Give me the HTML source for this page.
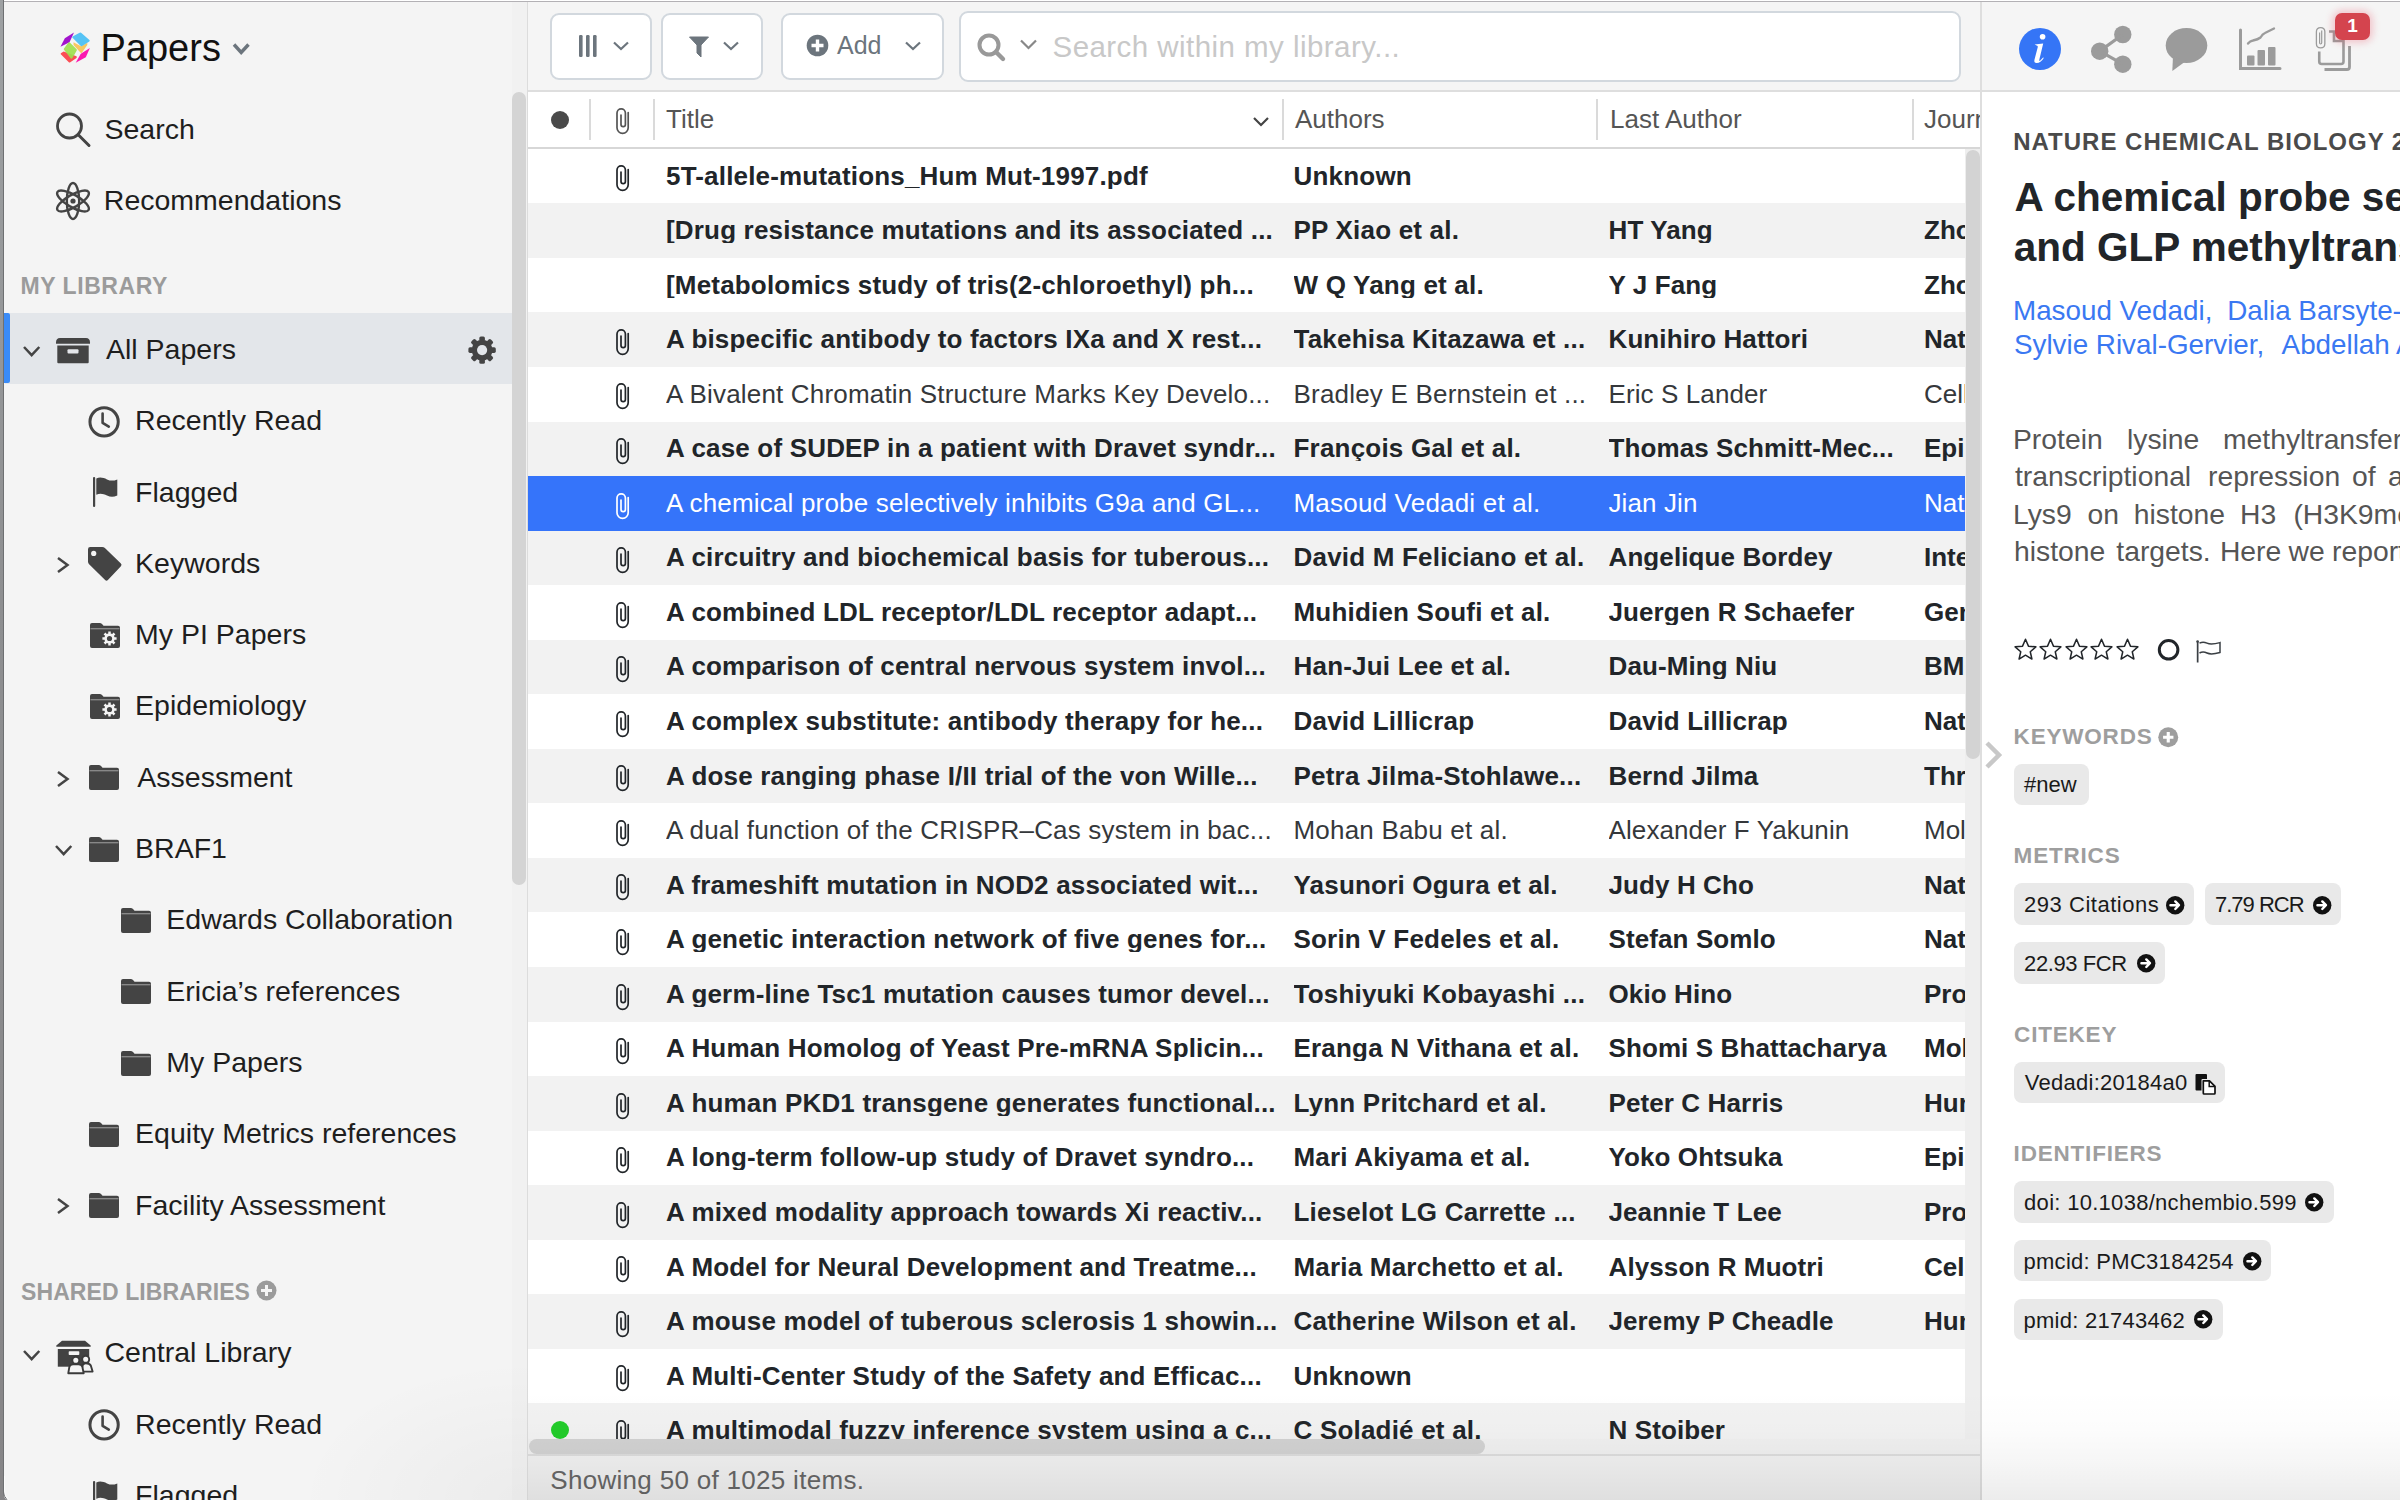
<!DOCTYPE html>
<html><head><meta charset="utf-8">
<style>
*{margin:0;padding:0;box-sizing:border-box}
html,body{width:2400px;height:1500px;overflow:hidden;background:#fff;font-family:"Liberation Sans",sans-serif}
#page{position:relative;width:2400px;height:1500px;overflow:hidden;background:#f4f4f4}
.abs{position:absolute}
.ic{position:absolute;overflow:visible}
/* desktop edge */
#edge{position:absolute;left:0;top:0;width:4px;height:1500px;background:linear-gradient(to bottom,#9ea1a3,#8e8f91 40%,#868587);border-right:1px solid #6e7072}
#topline{position:absolute;left:4px;top:0;width:2396px;height:2px;background:#fff;border-bottom:1px solid #b3b1b5}
/* sidebar */
#sidebar{position:absolute;left:5px;top:2px;width:522px;height:1498px;background:#f4f4f4;border-bottom-left-radius:10px;overflow:hidden}
.si{position:absolute;font-size:28.5px;line-height:28.5px;color:#1e1e1e;white-space:nowrap}
.sect{position:absolute;font-size:23px;line-height:23px;font-weight:bold;color:#9b9b9b;white-space:nowrap;letter-spacing:0.1px}
#sb-scroll{position:absolute;left:512px;top:92px;width:14px;height:793px;border-radius:7px;background:#d4d4d4}
#sb-track{position:absolute;left:512px;top:2px;width:15px;height:1498px;background:#f1f1f1}
#sb-div{position:absolute;left:527px;top:2px;width:1px;height:1498px;background:#dcdcdc}
/* main */
#main{position:absolute;left:528px;top:2px;width:1453px;height:1498px;background:#fff;overflow:hidden}
#toolbar{position:absolute;left:0;top:0;width:1453px;height:90px;background:#f5f5f5;border-bottom:2px solid #dedede}
.btn{position:absolute;background:#fff;border:2px solid #d2d8de;border-radius:9px}
#thead{position:absolute;left:0;top:90px;width:1453px;height:57px;background:#fff;border-bottom:2px solid #d7d7d7}
.th{position:absolute;top:13.7px;font-size:26px;line-height:26px;color:#555;white-space:nowrap}
.vdiv{position:absolute;top:7px;width:2px;height:41px;background:#dadada}
.row{position:absolute;left:0;width:1437px;height:54.55px;overflow:hidden;font-size:26px;line-height:26px}
.c{position:absolute;top:13.75px;white-space:nowrap;overflow:hidden}
.ct{left:138px;width:620px;letter-spacing:0.18px}
.ca{left:765.5px;width:300px;letter-spacing:0.2px}
.cl{left:1080.5px;width:300px;letter-spacing:0.1px}
.cj{left:1396px;width:45px}
.clip{position:absolute;left:77px;top:11.5px;width:35px;height:35px}
.gdot{position:absolute;left:23px;top:18px;width:18px;height:18px;border-radius:50%;background:#22cc2a}
#rows{position:absolute;left:0;top:0;width:1453px;height:1437px;overflow:hidden}
#vscroll-track{position:absolute;left:1437px;top:147px;width:16px;height:1290px;background:#eeeeee}
#vscroll{position:absolute;left:1438px;top:148px;width:14px;height:609px;border-radius:7px;background:#d3d3d3}
#hscroll-track{position:absolute;left:0;top:1437px;width:1453px;height:16px;background:#f0f0f0}
#hscroll{position:absolute;left:1px;top:1437px;width:956px;height:15px;border-radius:7.5px;background:#d2d2d2}
#footer{position:absolute;left:0;top:1452px;width:1453px;height:46px;background:#f1f1f1;border-top:2px solid #dddddd}
#footer span{position:absolute;left:22.3px;top:10.5px;font-size:26px;line-height:26px;color:#676767;white-space:nowrap;letter-spacing:0.3px}
#rdiv{position:absolute;left:1980px;top:2px;width:2px;height:1498px;background:#dedede}
/* right panel */
#right{position:absolute;left:1982px;top:2px;width:418px;height:1498px;background:#fff;overflow:hidden}
#rtool{position:absolute;left:0;top:0;width:418px;height:90px;background:#f5f5f5;border-bottom:2px solid #dedede}
.rlabel{position:absolute;font-size:22.5px;line-height:22.5px;font-weight:bold;color:#9e9e9e;white-space:nowrap;letter-spacing:0.4px}
.badge{position:absolute;height:41.5px;background:#e9e9e9;border-radius:8px;font-size:23px;line-height:23px;color:#1a1a1a;white-space:nowrap}
.badge span{position:absolute;left:11px;top:9.5px}
#shade{position:absolute;left:528px;top:1390px;width:1872px;height:110px;background:linear-gradient(to bottom,rgba(0,0,0,0) 0%,rgba(0,0,0,0.012) 35%,rgba(0,0,0,0.035) 65%,rgba(0,0,0,0.075) 100%);pointer-events:none}
#shade2{position:absolute;left:300px;top:1360px;width:228px;height:140px;background:radial-gradient(ellipse 230px 140px at 100% 100%,rgba(0,0,0,0.035),rgba(0,0,0,0) 100%);pointer-events:none}
</style></head><body><div id="page">
<div id="edge"></div>
<div id="topline"></div>

<div id="sidebar">
</div>
<div id="sb-track"></div>
<div id="sb-scroll"></div>
<div id="sb-div"></div>

<!-- sidebar content (absolute to page) -->
<svg class="ic" style="left:55px;top:28px" width="40" height="40" viewBox="0 0 40 40">
  <path d="M5.5 18.8 L9.8 10.2 L19 4.6 L14.5 14.2 Z" fill="#a214cc"/>
  <path d="M5.8 26.2 Q5.4 25.4 6.2 24.9 L8.7 23.6 L20.8 28 Q22.8 28.7 21.5 29.9 L15.3 34.3 Q14.5 34.9 13.8 34.2 Z" fill="#fb4e55"/>
  <path d="M18.5 14.3 L26 18.3 L32.3 14.8 L32.3 17 L27 24.4 Q26.2 25.3 25.4 24.6 L18.5 17 Z" fill="#f8c862"/>
  <path d="M17.3 9.6 Q17 9 17.6 8.6 L24.6 4.8 Q25.6 4.3 26.4 4.9 L34.4 12.1 Q35.2 12.8 34.3 13.5 L27.2 17.9 Q26.3 18.4 25.5 17.8 Z" fill="#55c3f5"/>
  <path d="M9 21.8 Q8.4 21.1 9 20.4 L13.2 14.8 Q14 14 14.8 14.6 L21.6 21.2 Q22.2 22 21.6 22.7 L17.3 30.2 Q16.6 31 15.8 30.4 Z" fill="#9ddf4e" fill-opacity="0.92"/>
  <path d="M20.7 34.8 L25.8 25.8 L34.9 20.1 L30.8 29.3 Z" fill="#fb18b0"/>
</svg>
<div class="abs" style="left:100.5px;top:28.6px;font-size:38px;line-height:38px;color:#111;white-space:nowrap">Papers</div>
<svg class="ic" style="left:231px;top:41px" width="21" height="16" viewBox="0 0 21 16"><path d="M3 3.5 L10.2 11.5 L17.5 3.5" fill="none" stroke="#6c757d" stroke-width="3.4"/></svg>

<svg class="ic" style="left:54px;top:111px" width="38" height="38" viewBox="0 0 38 38"><circle cx="15.5" cy="15" r="12" fill="none" stroke="#444" stroke-width="2.8"/><path d="M24 23.5 L35 34.5" stroke="#444" stroke-width="3" stroke-linecap="round"/></svg>
<div class="si" style="left:104.5px;top:114.6px">Search</div>
<svg class="ic" style="left:54px;top:181px" width="38" height="40" viewBox="0 0 38 40">
 <g fill="none" stroke="#444" stroke-width="2.4">
  <ellipse cx="19" cy="20" rx="6.2" ry="18"/>
  <ellipse cx="19" cy="20" rx="6.2" ry="18" transform="rotate(60 19 20)"/>
  <ellipse cx="19" cy="20" rx="6.2" ry="18" transform="rotate(-60 19 20)"/>
 </g><circle cx="19" cy="20" r="2.6" fill="#444"/></svg>
<div class="si" style="left:103.8px;top:185.9px">Recommendations</div>
<div class="sect" style="left:20.5px;top:274.8px;letter-spacing:0.55px">MY LIBRARY</div>
<div class="abs" style="left:5px;top:313.3px;width:507px;height:70.3px;background:#e3e6ea"></div>
<div class="abs" style="left:4px;top:313.3px;width:6px;height:70px;background:#3a8bf7;border-radius:0 2px 2px 0"></div>
<svg class="ic" style="left:467px;top:335px" width="30" height="30" viewBox="0 0 30 30"><circle cx="15.1" cy="15.1" r="10.4" fill="#444"/><rect x="12.3" y="1.4000000000000004" width="5.6" height="5.299999999999999" rx="1.6" fill="#444" transform="rotate(0 15.1 15.1)"/><rect x="12.3" y="1.4000000000000004" width="5.6" height="5.299999999999999" rx="1.6" fill="#444" transform="rotate(45 15.1 15.1)"/><rect x="12.3" y="1.4000000000000004" width="5.6" height="5.299999999999999" rx="1.6" fill="#444" transform="rotate(90 15.1 15.1)"/><rect x="12.3" y="1.4000000000000004" width="5.6" height="5.299999999999999" rx="1.6" fill="#444" transform="rotate(135 15.1 15.1)"/><rect x="12.3" y="1.4000000000000004" width="5.6" height="5.299999999999999" rx="1.6" fill="#444" transform="rotate(180 15.1 15.1)"/><rect x="12.3" y="1.4000000000000004" width="5.6" height="5.299999999999999" rx="1.6" fill="#444" transform="rotate(225 15.1 15.1)"/><rect x="12.3" y="1.4000000000000004" width="5.6" height="5.299999999999999" rx="1.6" fill="#444" transform="rotate(270 15.1 15.1)"/><rect x="12.3" y="1.4000000000000004" width="5.6" height="5.299999999999999" rx="1.6" fill="#444" transform="rotate(315 15.1 15.1)"/><circle cx="15.1" cy="15.1" r="5.1" fill="#e3e6ea"/></svg>
<div class="si" style="left:106.0px;top:334.9px">All Papers</div>
<svg class="ic" style="left:56px;top:338.0px" width="34" height="26" viewBox="0 0 34 26"><path d="M0 4.5 Q0 0 4 0 H30 Q34 0 34 4.5 V5.8 H0 Z" fill="#444"/><path d="M1.3 7.6 H32.7 V24.3 Q32.7 25.3 31.7 25.3 H2.3 Q1.3 25.3 1.3 24.3 Z" fill="#444"/><rect x="11.5" y="11.3" width="11" height="4.2" rx="1" fill="#e4e6ea"/></svg>
<svg class="ic" style="left:22.7px;top:346.0px" width="17.3" height="10.7" viewBox="0 0 17.3 10.7"><path d="M1 1 L8.65 9.2 L16.3 1" fill="none" stroke="#444" stroke-width="2.5"/></svg>
<div class="si" style="left:135.1px;top:406.2px">Recently Read</div>
<svg class="ic" style="left:88.2px;top:405.8px" width="34" height="34" viewBox="0 0 34 34"><circle cx="16.1" cy="15.85" r="14.15" fill="none" stroke="#444" stroke-width="3"/><path d="M14.6 7.5 V16.8 L20.8 20.6" fill="none" stroke="#444" stroke-width="2.6" stroke-linecap="round" stroke-linejoin="round"/></svg>
<div class="si" style="left:135.1px;top:477.5px">Flagged</div>
<svg class="ic" style="left:93px;top:477.1px" width="26" height="31" viewBox="0 0 26 31"><rect x="0" y="0" width="2.2" height="30" rx="1" fill="#444"/><path d="M3.3 1.5 C7 -0.2 10.5 0.8 14 2.4 C17.5 4 20.5 4 24.3 2.4 V18.5 C20.5 20.2 17.5 20.2 14 18.5 C10.5 16.9 7 15.9 3.3 17.8 Z" fill="#444"/></svg>
<div class="si" style="left:135.1px;top:548.8px">Keywords</div>
<svg class="ic" style="left:87.8px;top:547.1px" width="34" height="35" viewBox="0 0 34 35"><path d="M0 2.2 Q0 0 2.2 0 H14.2 Q15.8 0 16.9 1.1 L32.9 16.6 Q34.2 17.9 32.9 19.2 L19.9 33 Q18.5 34.4 17.1 33 L1.1 17.2 Q0 16.1 0 14.5 Z" fill="#444"/><circle cx="5.7" cy="6.4" r="2.6" fill="#f4f4f4"/></svg>
<svg class="ic" style="left:57.3px;top:556.6999999999999px" width="12" height="16" viewBox="0 0 12 16"><path d="M1 1 L10.5 8.0 L1 15" fill="none" stroke="#444" stroke-width="2.5"/></svg>
<div class="si" style="left:135.1px;top:620.1px">My PI Papers</div>
<svg class="ic" style="left:89.7px;top:623.1px" width="31" height="26" viewBox="0 0 31 26"><path d="M0 2 Q0 0 2 0 H10 Q11.5 0 12.5 1.5 L13.5 2.8 H28 Q30 2.8 30 4.8 V23 Q30 25 28 25 H2 Q0 25 0 23 Z" fill="#444"/><rect x="0.5" y="5.2" width="29" height="1.1" fill="#9a9a9a"/><path d="M26.59 14.23 L26.59 16.77 L24.54 16.71 L23.92 18.21 L25.41 19.62 L23.62 21.41 L22.21 19.92 L20.71 20.54 L20.77 22.59 L18.23 22.59 L18.29 20.54 L16.79 19.92 L15.38 21.41 L13.59 19.62 L15.08 18.21 L14.46 16.71 L12.41 16.77 L12.41 14.23 L14.46 14.29 L15.08 12.79 L13.59 11.38 L15.38 9.59 L16.79 11.08 L18.29 10.46 L18.23 8.41 L20.77 8.41 L20.71 10.46 L22.21 11.08 L23.62 9.59 L25.41 11.38 L23.92 12.79 L24.54 14.29 Z" fill="#f4f4f4"/><circle cx="19.5" cy="15.5" r="2.6" fill="#444"/></svg>
<div class="si" style="left:135.1px;top:691.4px">Epidemiology</div>
<svg class="ic" style="left:89.7px;top:694.4px" width="31" height="26" viewBox="0 0 31 26"><path d="M0 2 Q0 0 2 0 H10 Q11.5 0 12.5 1.5 L13.5 2.8 H28 Q30 2.8 30 4.8 V23 Q30 25 28 25 H2 Q0 25 0 23 Z" fill="#444"/><rect x="0.5" y="5.2" width="29" height="1.1" fill="#9a9a9a"/><path d="M26.59 14.23 L26.59 16.77 L24.54 16.71 L23.92 18.21 L25.41 19.62 L23.62 21.41 L22.21 19.92 L20.71 20.54 L20.77 22.59 L18.23 22.59 L18.29 20.54 L16.79 19.92 L15.38 21.41 L13.59 19.62 L15.08 18.21 L14.46 16.71 L12.41 16.77 L12.41 14.23 L14.46 14.29 L15.08 12.79 L13.59 11.38 L15.38 9.59 L16.79 11.08 L18.29 10.46 L18.23 8.41 L20.77 8.41 L20.71 10.46 L22.21 11.08 L23.62 9.59 L25.41 11.38 L23.92 12.79 L24.54 14.29 Z" fill="#f4f4f4"/><circle cx="19.5" cy="15.5" r="2.6" fill="#444"/></svg>
<div class="si" style="left:137.3px;top:762.7px">Assessment</div>
<svg class="ic" style="left:89.3px;top:765.4px" width="31" height="26" viewBox="0 0 31 26"><path d="M0 2 Q0 0 2 0 H10 Q11.5 0 12.5 1.5 L13.5 2.8 H28 Q30 2.8 30 4.8 V23 Q30 25 28 25 H2 Q0 25 0 23 Z" fill="#444"/><rect x="0.5" y="5.2" width="29" height="1.1" fill="#9a9a9a"/></svg>
<svg class="ic" style="left:57.3px;top:770.5999999999999px" width="12" height="16" viewBox="0 0 12 16"><path d="M1 1 L10.5 8.0 L1 15" fill="none" stroke="#444" stroke-width="2.5"/></svg>
<div class="si" style="left:135.1px;top:834.0px">BRAF1</div>
<svg class="ic" style="left:89.3px;top:836.6999999999999px" width="31" height="26" viewBox="0 0 31 26"><path d="M0 2 Q0 0 2 0 H10 Q11.5 0 12.5 1.5 L13.5 2.8 H28 Q30 2.8 30 4.8 V23 Q30 25 28 25 H2 Q0 25 0 23 Z" fill="#444"/><rect x="0.5" y="5.2" width="29" height="1.1" fill="#9a9a9a"/></svg>
<svg class="ic" style="left:54.5px;top:845.3999999999999px" width="17.3" height="10.7" viewBox="0 0 17.3 10.7"><path d="M1 1 L8.65 9.2 L16.3 1" fill="none" stroke="#444" stroke-width="2.5"/></svg>
<div class="si" style="left:166.3px;top:905.3px">Edwards Collaboration</div>
<svg class="ic" style="left:121.3px;top:908.0px" width="31" height="26" viewBox="0 0 31 26"><path d="M0 2 Q0 0 2 0 H10 Q11.5 0 12.5 1.5 L13.5 2.8 H28 Q30 2.8 30 4.8 V23 Q30 25 28 25 H2 Q0 25 0 23 Z" fill="#444"/><rect x="0.5" y="5.2" width="29" height="1.1" fill="#9a9a9a"/></svg>
<div class="si" style="left:166.3px;top:976.6px">Ericia’s references</div>
<svg class="ic" style="left:121.3px;top:979.3px" width="31" height="26" viewBox="0 0 31 26"><path d="M0 2 Q0 0 2 0 H10 Q11.5 0 12.5 1.5 L13.5 2.8 H28 Q30 2.8 30 4.8 V23 Q30 25 28 25 H2 Q0 25 0 23 Z" fill="#444"/><rect x="0.5" y="5.2" width="29" height="1.1" fill="#9a9a9a"/></svg>
<div class="si" style="left:166.3px;top:1047.9px">My Papers</div>
<svg class="ic" style="left:121.3px;top:1050.6px" width="31" height="26" viewBox="0 0 31 26"><path d="M0 2 Q0 0 2 0 H10 Q11.5 0 12.5 1.5 L13.5 2.8 H28 Q30 2.8 30 4.8 V23 Q30 25 28 25 H2 Q0 25 0 23 Z" fill="#444"/><rect x="0.5" y="5.2" width="29" height="1.1" fill="#9a9a9a"/></svg>
<div class="si" style="left:135.1px;top:1119.2px">Equity Metrics references</div>
<svg class="ic" style="left:89.3px;top:1121.8999999999999px" width="31" height="26" viewBox="0 0 31 26"><path d="M0 2 Q0 0 2 0 H10 Q11.5 0 12.5 1.5 L13.5 2.8 H28 Q30 2.8 30 4.8 V23 Q30 25 28 25 H2 Q0 25 0 23 Z" fill="#444"/><rect x="0.5" y="5.2" width="29" height="1.1" fill="#9a9a9a"/></svg>
<div class="si" style="left:135.1px;top:1190.5px">Facility Assessment</div>
<svg class="ic" style="left:89.3px;top:1193.1999999999998px" width="31" height="26" viewBox="0 0 31 26"><path d="M0 2 Q0 0 2 0 H10 Q11.5 0 12.5 1.5 L13.5 2.8 H28 Q30 2.8 30 4.8 V23 Q30 25 28 25 H2 Q0 25 0 23 Z" fill="#444"/><rect x="0.5" y="5.2" width="29" height="1.1" fill="#9a9a9a"/></svg>
<svg class="ic" style="left:57.3px;top:1198.3999999999999px" width="12" height="16" viewBox="0 0 12 16"><path d="M1 1 L10.5 8.0 L1 15" fill="none" stroke="#444" stroke-width="2.5"/></svg>
<div class="sect" style="left:21px;top:1280.6px">SHARED LIBRARIES</div>
<svg class="ic" style="left:256px;top:1280px" width="21" height="21" viewBox="0 0 21 21"><circle cx="10.5" cy="10.5" r="10" fill="#9b9b9b"/><path d="M10.5 5 V16 M5 10.5 H16" stroke="#f4f4f4" stroke-width="3"/></svg>
<div class="si" style="left:104.5px;top:1338.4px">Central Library</div>
<svg class="ic" style="left:22.7px;top:1349.5px" width="17.3" height="10.7" viewBox="0 0 17.3 10.7"><path d="M1 1 L8.65 9.2 L16.3 1" fill="none" stroke="#444" stroke-width="2.5"/></svg>
<svg class="ic" style="left:50px;top:1330px" width="50" height="50" viewBox="0 0 50 50"><path d="M12 10.7 H35 L40.7 15.6 V16.7 H6.3 V15.6 Z" fill="#424242"/><rect x="7.8" y="19" width="31.4" height="17.7" fill="#424242"/><rect x="18.7" y="21.3" width="10.6" height="3.7" rx="0.8" fill="#f4f4f4"/><path d="M31.6 41.6 L32.6 35.4 Q33.3 33.2 35.8 33.2 Q39.5 33.2 40.8 35.4 L42.6 41.6 Z" fill="#f4f4f4" stroke="#3a3a3a" stroke-width="1.9" stroke-linejoin="round"/><circle cx="35.7" cy="29.3" r="3.5" fill="#f4f4f4" stroke="#3a3a3a" stroke-width="1.9"/><path d="M18.3 43.2 L19.4 36.6 Q20.1 34.4 23 34.4 H28.6 Q31.4 34.4 32.3 36.6 L33.7 43.2 Z" fill="#f4f4f4" stroke="#3a3a3a" stroke-width="1.9" stroke-linejoin="round"/><circle cx="25.8" cy="30.3" r="3.5" fill="#f4f4f4" stroke="#3a3a3a" stroke-width="1.9"/></svg>
<div class="si" style="left:135.1px;top:1409.7px">Recently Read</div>
<svg class="ic" style="left:88.2px;top:1409.3px" width="34" height="34" viewBox="0 0 34 34"><circle cx="16.1" cy="15.85" r="14.15" fill="none" stroke="#444" stroke-width="3"/><path d="M14.6 7.5 V16.8 L20.8 20.6" fill="none" stroke="#444" stroke-width="2.6" stroke-linecap="round" stroke-linejoin="round"/></svg>
<div class="si" style="left:135.1px;top:1481.0px">Flagged</div>
<svg class="ic" style="left:93px;top:1480.6px" width="26" height="31" viewBox="0 0 26 31"><rect x="0" y="0" width="2.2" height="30" rx="1" fill="#444"/><path d="M3.3 1.5 C7 -0.2 10.5 0.8 14 2.4 C17.5 4 20.5 4 24.3 2.4 V18.5 C20.5 20.2 17.5 20.2 14 18.5 C10.5 16.9 7 15.9 3.3 17.8 Z" fill="#444"/></svg>

<div id="main">
 <div id="toolbar">
  <div class="btn" style="left:21.5px;top:11px;width:102px;height:66.5px"></div>
  <svg class="ic" style="left:49px;top:31px" width="24" height="28" viewBox="0 0 24 28"><rect x="2" y="2" width="3.6" height="22" rx="1.2" fill="#6c757d"/><rect x="9" y="2" width="3.6" height="22" rx="1.2" fill="#6c757d"/><rect x="16" y="2" width="3.6" height="22" rx="1.2" fill="#6c757d"/></svg>
  <svg class="ic" style="left:84px;top:38px" width="18" height="14" viewBox="0 0 18 14"><path d="M2 2.5 L9 9 L16 2.5" fill="none" stroke="#6c757d" stroke-width="2.2"/></svg>
  <div class="btn" style="left:132.5px;top:11px;width:102.5px;height:66.5px"></div>
  <svg class="ic" style="left:159px;top:32px" width="24" height="26" viewBox="0 0 24 26"><path d="M2.5 3 H21.5 L14 11 V23 L10 19 V11 Z" fill="#6c757d" stroke="#6c757d" stroke-width="1" stroke-linejoin="round"/></svg>
  <svg class="ic" style="left:194px;top:38px" width="18" height="14" viewBox="0 0 18 14"><path d="M2 2.5 L9 9 L16 2.5" fill="none" stroke="#6c757d" stroke-width="2.2"/></svg>
  <div class="btn" style="left:252.5px;top:11px;width:163px;height:66.5px"></div>
  <svg class="ic" style="left:278px;top:32px" width="24" height="24" viewBox="0 0 24 24"><circle cx="11.5" cy="11.5" r="10.8" fill="#6c757d"/><path d="M11.5 5.5 V17.5 M5.5 11.5 H17.5" stroke="#fff" stroke-width="3.4"/></svg>
  <div class="abs" style="left:309px;top:31.1px;font-size:25px;line-height:25px;color:#6c757d">Add</div>
  <svg class="ic" style="left:376px;top:38px" width="18" height="14" viewBox="0 0 18 14"><path d="M2 2.5 L9 9 L16 2.5" fill="none" stroke="#6c757d" stroke-width="2.2"/></svg>
  <div class="btn" style="left:430.5px;top:9px;width:1002px;height:70.5px"></div>
  <svg class="ic" style="left:448px;top:30px" width="32" height="32" viewBox="0 0 32 32"><circle cx="13" cy="13" r="9.5" fill="none" stroke="#999" stroke-width="4"/><path d="M20 20 L27 27" stroke="#999" stroke-width="4.4" stroke-linecap="round"/></svg>
  <svg class="ic" style="left:491px;top:36px" width="20" height="14" viewBox="0 0 20 14"><path d="M2 2.5 L9.5 10 L17 2.5" fill="none" stroke="#888" stroke-width="2.2"/></svg>
  <div class="abs" style="left:524.5px;top:29.7px;font-size:29.5px;line-height:29.5px;color:#c8c8c8;white-space:nowrap;letter-spacing:0.45px">Search within my library...</div>
 </div>
 <div id="thead">
  <div class="abs" style="left:23px;top:19px;width:18px;height:18px;border-radius:50%;background:#4a4a4a"></div>
  <div class="vdiv" style="left:61.3px"></div>
  <div class="clip" style="left:77px;top:11px"><svg width="35" height="35" viewBox="0 0 35 35" style="position:absolute;left:0;top:0"><path d="M16 12 V21.5 a2.2 2.2 0 0 0 4.4 0 V10 a4.2 4.2 0 0 0 -8.4 0 V24.8 a5.6 5.6 0 0 0 11.2 0 V9.5" fill="none" stroke="#555" stroke-width="1.7" stroke-linecap="round"/></svg></div>
  <div class="vdiv" style="left:124.5px"></div>
  <div class="th" style="left:138px">Title</div>
  <svg class="ic" style="left:724px;top:24px" width="18" height="13" viewBox="0 0 18 13"><path d="M2 2 L9 9 L16 2" fill="none" stroke="#444" stroke-width="2.2"/></svg>
  <div class="vdiv" style="left:754px"></div>
  <div class="th" style="left:767px">Authors</div>
  <div class="vdiv" style="left:1068px"></div>
  <div class="th" style="left:1082px">Last Author</div>
  <div class="vdiv" style="left:1384px"></div>
  <div class="th" style="left:1396px">Journal</div>
 </div>
 <div id="rows">
<div class="row" style="top:146.75px;background:#ffffff;color:#212529;font-weight:bold"><div class="clip"><svg width="35" height="35" viewBox="0 0 35 35" style="position:absolute;left:0;top:0"><path d="M16 12 V21.5 a2.2 2.2 0 0 0 4.4 0 V10 a4.2 4.2 0 0 0 -8.4 0 V24.8 a5.6 5.6 0 0 0 11.2 0 V9.5" fill="none" stroke="#212529" stroke-width="1.7" stroke-linecap="round"/></svg></div><div class="c ct">5T-allele-mutations_Hum Mut-1997.pdf</div><div class="c ca">Unknown</div><div class="c cl"></div><div class="c cj"></div></div>
<div class="row" style="top:201.30px;background:#f2f2f2;color:#212529;font-weight:bold"><div class="c ct">[Drug resistance mutations and its associated ...</div><div class="c ca">PP Xiao et al.</div><div class="c cl">HT Yang</div><div class="c cj">Zhong</div></div>
<div class="row" style="top:255.85px;background:#ffffff;color:#212529;font-weight:bold"><div class="c ct">[Metabolomics study of tris(2-chloroethyl) ph...</div><div class="c ca">W Q Yang et al.</div><div class="c cl">Y J Fang</div><div class="c cj">Zhong</div></div>
<div class="row" style="top:310.40px;background:#f2f2f2;color:#212529;font-weight:bold"><div class="clip"><svg width="35" height="35" viewBox="0 0 35 35" style="position:absolute;left:0;top:0"><path d="M16 12 V21.5 a2.2 2.2 0 0 0 4.4 0 V10 a4.2 4.2 0 0 0 -8.4 0 V24.8 a5.6 5.6 0 0 0 11.2 0 V9.5" fill="none" stroke="#212529" stroke-width="1.7" stroke-linecap="round"/></svg></div><div class="c ct">A bispecific antibody to factors IXa and X rest...</div><div class="c ca">Takehisa Kitazawa et ...</div><div class="c cl">Kunihiro Hattori</div><div class="c cj">Nature</div></div>
<div class="row" style="top:364.95px;background:#ffffff;color:#35383b;font-weight:normal"><div class="clip"><svg width="35" height="35" viewBox="0 0 35 35" style="position:absolute;left:0;top:0"><path d="M16 12 V21.5 a2.2 2.2 0 0 0 4.4 0 V10 a4.2 4.2 0 0 0 -8.4 0 V24.8 a5.6 5.6 0 0 0 11.2 0 V9.5" fill="none" stroke="#212529" stroke-width="1.7" stroke-linecap="round"/></svg></div><div class="c ct">A Bivalent Chromatin Structure Marks Key Develo...</div><div class="c ca">Bradley E Bernstein et ...</div><div class="c cl">Eric S Lander</div><div class="c cj">Cell</div></div>
<div class="row" style="top:419.50px;background:#f2f2f2;color:#212529;font-weight:bold"><div class="clip"><svg width="35" height="35" viewBox="0 0 35 35" style="position:absolute;left:0;top:0"><path d="M16 12 V21.5 a2.2 2.2 0 0 0 4.4 0 V10 a4.2 4.2 0 0 0 -8.4 0 V24.8 a5.6 5.6 0 0 0 11.2 0 V9.5" fill="none" stroke="#212529" stroke-width="1.7" stroke-linecap="round"/></svg></div><div class="c ct">A case of SUDEP in a patient with Dravet syndr...</div><div class="c ca">François Gal et al.</div><div class="c cl">Thomas Schmitt-Mec...</div><div class="c cj">Epilepsia</div></div>
<div class="row" style="top:474.05px;background:#3574fa;color:#ffffff;font-weight:normal"><div class="clip"><svg width="35" height="35" viewBox="0 0 35 35" style="position:absolute;left:0;top:0"><path d="M16 12 V21.5 a2.2 2.2 0 0 0 4.4 0 V10 a4.2 4.2 0 0 0 -8.4 0 V24.8 a5.6 5.6 0 0 0 11.2 0 V9.5" fill="none" stroke="#ffffff" stroke-width="1.7" stroke-linecap="round"/></svg></div><div class="c ct">A chemical probe selectively inhibits G9a and GL...</div><div class="c ca">Masoud Vedadi et al.</div><div class="c cl">Jian Jin</div><div class="c cj">Nature</div></div>
<div class="row" style="top:528.60px;background:#f2f2f2;color:#212529;font-weight:bold"><div class="clip"><svg width="35" height="35" viewBox="0 0 35 35" style="position:absolute;left:0;top:0"><path d="M16 12 V21.5 a2.2 2.2 0 0 0 4.4 0 V10 a4.2 4.2 0 0 0 -8.4 0 V24.8 a5.6 5.6 0 0 0 11.2 0 V9.5" fill="none" stroke="#212529" stroke-width="1.7" stroke-linecap="round"/></svg></div><div class="c ct">A circuitry and biochemical basis for tuberous...</div><div class="c ca">David M Feliciano et al.</div><div class="c cl">Angelique Bordey</div><div class="c cj">Internat</div></div>
<div class="row" style="top:583.15px;background:#ffffff;color:#212529;font-weight:bold"><div class="clip"><svg width="35" height="35" viewBox="0 0 35 35" style="position:absolute;left:0;top:0"><path d="M16 12 V21.5 a2.2 2.2 0 0 0 4.4 0 V10 a4.2 4.2 0 0 0 -8.4 0 V24.8 a5.6 5.6 0 0 0 11.2 0 V9.5" fill="none" stroke="#212529" stroke-width="1.7" stroke-linecap="round"/></svg></div><div class="c ct">A combined LDL receptor/LDL receptor adapt...</div><div class="c ca">Muhidien Soufi et al.</div><div class="c cl">Juergen R Schaefer</div><div class="c cj">Gene</div></div>
<div class="row" style="top:637.70px;background:#f2f2f2;color:#212529;font-weight:bold"><div class="clip"><svg width="35" height="35" viewBox="0 0 35 35" style="position:absolute;left:0;top:0"><path d="M16 12 V21.5 a2.2 2.2 0 0 0 4.4 0 V10 a4.2 4.2 0 0 0 -8.4 0 V24.8 a5.6 5.6 0 0 0 11.2 0 V9.5" fill="none" stroke="#212529" stroke-width="1.7" stroke-linecap="round"/></svg></div><div class="c ct">A comparison of central nervous system invol...</div><div class="c ca">Han-Jui Lee et al.</div><div class="c cl">Dau-Ming Niu</div><div class="c cj">BMC</div></div>
<div class="row" style="top:692.25px;background:#ffffff;color:#212529;font-weight:bold"><div class="clip"><svg width="35" height="35" viewBox="0 0 35 35" style="position:absolute;left:0;top:0"><path d="M16 12 V21.5 a2.2 2.2 0 0 0 4.4 0 V10 a4.2 4.2 0 0 0 -8.4 0 V24.8 a5.6 5.6 0 0 0 11.2 0 V9.5" fill="none" stroke="#212529" stroke-width="1.7" stroke-linecap="round"/></svg></div><div class="c ct">A complex substitute: antibody therapy for he...</div><div class="c ca">David Lillicrap</div><div class="c cl">David Lillicrap</div><div class="c cj">Nature</div></div>
<div class="row" style="top:746.80px;background:#f2f2f2;color:#212529;font-weight:bold"><div class="clip"><svg width="35" height="35" viewBox="0 0 35 35" style="position:absolute;left:0;top:0"><path d="M16 12 V21.5 a2.2 2.2 0 0 0 4.4 0 V10 a4.2 4.2 0 0 0 -8.4 0 V24.8 a5.6 5.6 0 0 0 11.2 0 V9.5" fill="none" stroke="#212529" stroke-width="1.7" stroke-linecap="round"/></svg></div><div class="c ct">A dose ranging phase I/II trial of the von Wille...</div><div class="c ca">Petra Jilma-Stohlawe...</div><div class="c cl">Bernd Jilma</div><div class="c cj">Thromb</div></div>
<div class="row" style="top:801.35px;background:#ffffff;color:#35383b;font-weight:normal"><div class="clip"><svg width="35" height="35" viewBox="0 0 35 35" style="position:absolute;left:0;top:0"><path d="M16 12 V21.5 a2.2 2.2 0 0 0 4.4 0 V10 a4.2 4.2 0 0 0 -8.4 0 V24.8 a5.6 5.6 0 0 0 11.2 0 V9.5" fill="none" stroke="#212529" stroke-width="1.7" stroke-linecap="round"/></svg></div><div class="c ct">A dual function of the CRISPR–Cas system in bac...</div><div class="c ca">Mohan Babu et al.</div><div class="c cl">Alexander F Yakunin</div><div class="c cj">Molec</div></div>
<div class="row" style="top:855.90px;background:#f2f2f2;color:#212529;font-weight:bold"><div class="clip"><svg width="35" height="35" viewBox="0 0 35 35" style="position:absolute;left:0;top:0"><path d="M16 12 V21.5 a2.2 2.2 0 0 0 4.4 0 V10 a4.2 4.2 0 0 0 -8.4 0 V24.8 a5.6 5.6 0 0 0 11.2 0 V9.5" fill="none" stroke="#212529" stroke-width="1.7" stroke-linecap="round"/></svg></div><div class="c ct">A frameshift mutation in NOD2 associated wit...</div><div class="c ca">Yasunori Ogura et al.</div><div class="c cl">Judy H Cho</div><div class="c cj">Nature</div></div>
<div class="row" style="top:910.45px;background:#ffffff;color:#212529;font-weight:bold"><div class="clip"><svg width="35" height="35" viewBox="0 0 35 35" style="position:absolute;left:0;top:0"><path d="M16 12 V21.5 a2.2 2.2 0 0 0 4.4 0 V10 a4.2 4.2 0 0 0 -8.4 0 V24.8 a5.6 5.6 0 0 0 11.2 0 V9.5" fill="none" stroke="#212529" stroke-width="1.7" stroke-linecap="round"/></svg></div><div class="c ct">A genetic interaction network of five genes for...</div><div class="c ca">Sorin V Fedeles et al.</div><div class="c cl">Stefan Somlo</div><div class="c cj">Nature</div></div>
<div class="row" style="top:965.00px;background:#f2f2f2;color:#212529;font-weight:bold"><div class="clip"><svg width="35" height="35" viewBox="0 0 35 35" style="position:absolute;left:0;top:0"><path d="M16 12 V21.5 a2.2 2.2 0 0 0 4.4 0 V10 a4.2 4.2 0 0 0 -8.4 0 V24.8 a5.6 5.6 0 0 0 11.2 0 V9.5" fill="none" stroke="#212529" stroke-width="1.7" stroke-linecap="round"/></svg></div><div class="c ct">A germ-line Tsc1 mutation causes tumor devel...</div><div class="c ca">Toshiyuki Kobayashi ...</div><div class="c cl">Okio Hino</div><div class="c cj">Proc</div></div>
<div class="row" style="top:1019.55px;background:#ffffff;color:#212529;font-weight:bold"><div class="clip"><svg width="35" height="35" viewBox="0 0 35 35" style="position:absolute;left:0;top:0"><path d="M16 12 V21.5 a2.2 2.2 0 0 0 4.4 0 V10 a4.2 4.2 0 0 0 -8.4 0 V24.8 a5.6 5.6 0 0 0 11.2 0 V9.5" fill="none" stroke="#212529" stroke-width="1.7" stroke-linecap="round"/></svg></div><div class="c ct">A Human Homolog of Yeast Pre-mRNA Splicin...</div><div class="c ca">Eranga N Vithana et al.</div><div class="c cl">Shomi S Bhattacharya</div><div class="c cj">Molec</div></div>
<div class="row" style="top:1074.10px;background:#f2f2f2;color:#212529;font-weight:bold"><div class="clip"><svg width="35" height="35" viewBox="0 0 35 35" style="position:absolute;left:0;top:0"><path d="M16 12 V21.5 a2.2 2.2 0 0 0 4.4 0 V10 a4.2 4.2 0 0 0 -8.4 0 V24.8 a5.6 5.6 0 0 0 11.2 0 V9.5" fill="none" stroke="#212529" stroke-width="1.7" stroke-linecap="round"/></svg></div><div class="c ct">A human PKD1 transgene generates functional...</div><div class="c ca">Lynn Pritchard et al.</div><div class="c cl">Peter C Harris</div><div class="c cj">Human</div></div>
<div class="row" style="top:1128.65px;background:#ffffff;color:#212529;font-weight:bold"><div class="clip"><svg width="35" height="35" viewBox="0 0 35 35" style="position:absolute;left:0;top:0"><path d="M16 12 V21.5 a2.2 2.2 0 0 0 4.4 0 V10 a4.2 4.2 0 0 0 -8.4 0 V24.8 a5.6 5.6 0 0 0 11.2 0 V9.5" fill="none" stroke="#212529" stroke-width="1.7" stroke-linecap="round"/></svg></div><div class="c ct">A long-term follow-up study of Dravet syndro...</div><div class="c ca">Mari Akiyama et al.</div><div class="c cl">Yoko Ohtsuka</div><div class="c cj">Epilepsia</div></div>
<div class="row" style="top:1183.20px;background:#f2f2f2;color:#212529;font-weight:bold"><div class="clip"><svg width="35" height="35" viewBox="0 0 35 35" style="position:absolute;left:0;top:0"><path d="M16 12 V21.5 a2.2 2.2 0 0 0 4.4 0 V10 a4.2 4.2 0 0 0 -8.4 0 V24.8 a5.6 5.6 0 0 0 11.2 0 V9.5" fill="none" stroke="#212529" stroke-width="1.7" stroke-linecap="round"/></svg></div><div class="c ct">A mixed modality approach towards Xi reactiv...</div><div class="c ca">Lieselot LG Carrette ...</div><div class="c cl">Jeannie T Lee</div><div class="c cj">Proc</div></div>
<div class="row" style="top:1237.75px;background:#ffffff;color:#212529;font-weight:bold"><div class="clip"><svg width="35" height="35" viewBox="0 0 35 35" style="position:absolute;left:0;top:0"><path d="M16 12 V21.5 a2.2 2.2 0 0 0 4.4 0 V10 a4.2 4.2 0 0 0 -8.4 0 V24.8 a5.6 5.6 0 0 0 11.2 0 V9.5" fill="none" stroke="#212529" stroke-width="1.7" stroke-linecap="round"/></svg></div><div class="c ct">A Model for Neural Development and Treatme...</div><div class="c ca">Maria Marchetto et al.</div><div class="c cl">Alysson R Muotri</div><div class="c cj">Cell</div></div>
<div class="row" style="top:1292.30px;background:#f2f2f2;color:#212529;font-weight:bold"><div class="clip"><svg width="35" height="35" viewBox="0 0 35 35" style="position:absolute;left:0;top:0"><path d="M16 12 V21.5 a2.2 2.2 0 0 0 4.4 0 V10 a4.2 4.2 0 0 0 -8.4 0 V24.8 a5.6 5.6 0 0 0 11.2 0 V9.5" fill="none" stroke="#212529" stroke-width="1.7" stroke-linecap="round"/></svg></div><div class="c ct">A mouse model of tuberous sclerosis 1 showin...</div><div class="c ca">Catherine Wilson et al.</div><div class="c cl">Jeremy P Cheadle</div><div class="c cj">Human</div></div>
<div class="row" style="top:1346.85px;background:#ffffff;color:#212529;font-weight:bold"><div class="clip"><svg width="35" height="35" viewBox="0 0 35 35" style="position:absolute;left:0;top:0"><path d="M16 12 V21.5 a2.2 2.2 0 0 0 4.4 0 V10 a4.2 4.2 0 0 0 -8.4 0 V24.8 a5.6 5.6 0 0 0 11.2 0 V9.5" fill="none" stroke="#212529" stroke-width="1.7" stroke-linecap="round"/></svg></div><div class="c ct">A Multi-Center Study of the Safety and Efficac...</div><div class="c ca">Unknown</div><div class="c cl"></div><div class="c cj"></div></div>
<div class="row" style="top:1401.40px;background:#f2f2f2;color:#212529;font-weight:bold"><div class="gdot"></div><div class="clip"><svg width="35" height="35" viewBox="0 0 35 35" style="position:absolute;left:0;top:0"><path d="M16 12 V21.5 a2.2 2.2 0 0 0 4.4 0 V10 a4.2 4.2 0 0 0 -8.4 0 V24.8 a5.6 5.6 0 0 0 11.2 0 V9.5" fill="none" stroke="#212529" stroke-width="1.7" stroke-linecap="round"/></svg></div><div class="c ct">A multimodal fuzzy inference system using a c...</div><div class="c ca">C Soladié et al.</div><div class="c cl">N Stoiber</div><div class="c cj"></div></div>
 </div>
 <div id="vscroll-track"></div>
 <div id="vscroll"></div>
 <div id="hscroll-track"></div>
 <div id="hscroll"></div>
 <div id="footer"><span>Showing 50 of 1025 items.</span></div>
</div>
<div id="rdiv"></div>

<div id="right">
 <div id="rtool">
  <svg class="ic" style="left:37px;top:26px" width="42" height="42" viewBox="0 0 42 42"><circle cx="21" cy="21" r="21" fill="#3575f6"/><circle cx="23.6" cy="8.8" r="2.8" fill="#fff"/><path d="M15.6 16.6 L24.2 15.4 L20.3 31.8 Q19.9 33.6 21.3 32.6 L24.3 29.2 L24.6 30.3 Q21.6 35.2 17.6 35.1 Q14.8 35 15.4 32 L18.8 18.9 Q19.1 17.5 17.6 17.4 Z" fill="#fff"/></svg>
  <svg class="ic" style="left:107px;top:22px" width="44" height="52" viewBox="0 0 44 52"><g fill="#9b9b9b"><circle cx="33.8" cy="10.5" r="8.7"/><circle cx="10.7" cy="27.2" r="8.7"/><circle cx="33.8" cy="40.2" r="8.7"/></g><path d="M33.8 10.5 L10.7 27.2 L33.8 40.2" fill="none" stroke="#9b9b9b" stroke-width="3.2"/></svg>
  <svg class="ic" style="left:182px;top:24px" width="46" height="46" viewBox="0 0 46 46"><ellipse cx="22.5" cy="19.5" rx="20.8" ry="17.5" fill="#9b9b9b"/><path d="M9 30 L8.3 45 L22 35 Z" fill="#9b9b9b"/></svg>
  <svg class="ic" style="left:255px;top:24px" width="48" height="48" viewBox="0 0 48 48"><path d="M3.5 4 V42.5 H43" fill="none" stroke="#9b9b9b" stroke-width="3" stroke-linecap="round"/><rect x="10" y="29.5" width="7.5" height="10" rx="1" fill="#9b9b9b"/><rect x="20.5" y="24" width="7.5" height="15.5" rx="1" fill="#9b9b9b"/><rect x="31" y="21" width="7.5" height="18.5" rx="1" fill="#9b9b9b"/><path d="M11 17.5 Q13 15 16 14.5 Q21 13.5 23.5 11.5 Q25.5 8 28 7 L37 2.5" fill="none" stroke="#9b9b9b" stroke-width="2.3" stroke-linecap="round"/></svg>
  <svg class="ic" style="left:330px;top:22px" width="42" height="50" viewBox="0 0 42 50"><path d="M4.4 7.8 Q4.4 3.65 8.6 3.65 Q12.85 3.65 12.85 7.8 V19.7 Q12.85 23.85 8.6 23.85 Q4.4 23.85 4.4 19.7 Z" fill="none" stroke="#9b9b9b" stroke-width="1.3"/><path d="M7.6 8.5 V18.8 Q7.6 20 8.6 20 Q9.7 20 9.7 18.8 V6.5" fill="none" stroke="#9b9b9b" stroke-width="1.2"/><path d="M7.25 27.5 V37.5 Q7.25 40 9.75 40 H29 Q31.5 40 31.5 37.5 V17 H22 V7.5 H17" fill="none" stroke="#9b9b9b" stroke-width="2.6"/><path d="M12.5 45.5 H35 Q37.5 45.5 37.5 43 V22" fill="none" stroke="#9b9b9b" stroke-width="2.8"/></svg>
  <div class="abs" style="left:353px;top:11px;width:35px;height:26.5px;border-radius:7px;background:#d4444e;box-shadow:0 0 7px 3px rgba(235,80,100,0.28);color:#fff;font-weight:bold;font-size:19px;line-height:26.5px;text-align:center">1</div>
 </div>
 <div class="abs" style="left:31.20px;top:128.48px;font-size:24px;line-height:24px;font-weight:bold;color:#4a4a4a;white-space:nowrap;letter-spacing:1.0px;">NATURE CHEMICAL BIOLOGY 2011</div>
 <div class="abs" style="left:32.50px;top:175.42px;font-size:40.5px;line-height:40.5px;font-weight:bold;color:#212529;white-space:nowrap;letter-spacing:0.0px;">A chemical probe selectively inhibits G9a</div>
 <div class="abs" style="left:31.80px;top:225.42px;font-size:40.5px;line-height:40.5px;font-weight:bold;color:#212529;white-space:nowrap;letter-spacing:0.0px;">and GLP methyltransferase activity in cells</div>
 <div class="abs" style="left:31.00px;top:294.97px;font-size:27.8px;line-height:27.8px;font-weight:normal;color:#3a78f2;white-space:nowrap;letter-spacing:0.0px;">Masoud Vedadi,</div>
 <div class="abs" style="left:245.30px;top:294.97px;font-size:27.8px;line-height:27.8px;font-weight:normal;color:#3a78f2;white-space:nowrap;letter-spacing:0.0px;">Dalia Barsyte-Lovejoy,</div>
 <div class="abs" style="left:32.00px;top:328.67px;font-size:27.8px;line-height:27.8px;font-weight:normal;color:#3a78f2;white-space:nowrap;letter-spacing:0.0px;">Sylvie Rival-Gervier,</div>
 <div class="abs" style="left:299.60px;top:328.67px;font-size:27.8px;line-height:27.8px;font-weight:normal;color:#3a78f2;white-space:nowrap;letter-spacing:0.0px;">Abdellah Allali-Hassani,</div>
 <div class="abs" style="left:31.00px;top:422.54px;font-size:28.3px;line-height:28.3px;font-weight:normal;color:#555555;white-space:nowrap;letter-spacing:0.0px;">Protein</div>
 <div class="abs" style="left:145.00px;top:422.54px;font-size:28.3px;line-height:28.3px;font-weight:normal;color:#555555;white-space:nowrap;letter-spacing:0.0px;">lysine</div>
 <div class="abs" style="left:241.00px;top:422.54px;font-size:28.3px;line-height:28.3px;font-weight:normal;color:#555555;white-space:nowrap;letter-spacing:0.0px;">methyltransferases</div>
 <div class="abs" style="left:33.00px;top:459.94px;font-size:28.3px;line-height:28.3px;font-weight:normal;color:#555555;white-space:nowrap;letter-spacing:0.0px;">transcriptional</div>
 <div class="abs" style="left:226.00px;top:459.94px;font-size:28.3px;line-height:28.3px;font-weight:normal;color:#555555;white-space:nowrap;letter-spacing:0.0px;">repression</div>
 <div class="abs" style="left:370.00px;top:459.94px;font-size:28.3px;line-height:28.3px;font-weight:normal;color:#555555;white-space:nowrap;letter-spacing:0.0px;">of</div>
 <div class="abs" style="left:406.00px;top:459.94px;font-size:28.3px;line-height:28.3px;font-weight:normal;color:#555555;white-space:nowrap;letter-spacing:0.0px;">a</div>
 <div class="abs" style="left:443.00px;top:459.94px;font-size:28.3px;line-height:28.3px;font-weight:normal;color:#555555;white-space:nowrap;letter-spacing:0.0px;">variety</div>
 <div class="abs" style="left:31.00px;top:497.54px;font-size:28.3px;line-height:28.3px;font-weight:normal;color:#555555;white-space:nowrap;letter-spacing:0.0px;">Lys9</div>
 <div class="abs" style="left:105.50px;top:497.54px;font-size:28.3px;line-height:28.3px;font-weight:normal;color:#555555;white-space:nowrap;letter-spacing:0.0px;">on</div>
 <div class="abs" style="left:151.80px;top:497.54px;font-size:28.3px;line-height:28.3px;font-weight:normal;color:#555555;white-space:nowrap;letter-spacing:0.0px;">histone</div>
 <div class="abs" style="left:258.00px;top:497.54px;font-size:28.3px;line-height:28.3px;font-weight:normal;color:#555555;white-space:nowrap;letter-spacing:0.0px;">H3</div>
 <div class="abs" style="left:311.40px;top:497.54px;font-size:28.3px;line-height:28.3px;font-weight:normal;color:#555555;white-space:nowrap;letter-spacing:0.0px;">(H3K9me2)</div>
 <div class="abs" style="left:32.00px;top:535.04px;font-size:28.3px;line-height:28.3px;font-weight:normal;color:#555555;white-space:nowrap;letter-spacing:0.0px;">histone</div>
 <div class="abs" style="left:134.30px;top:535.04px;font-size:28.3px;line-height:28.3px;font-weight:normal;color:#555555;white-space:nowrap;letter-spacing:0.0px;">targets.</div>
 <div class="abs" style="left:237.90px;top:535.04px;font-size:28.3px;line-height:28.3px;font-weight:normal;color:#555555;white-space:nowrap;letter-spacing:0.0px;">Here</div>
 <div class="abs" style="left:306.50px;top:535.04px;font-size:28.3px;line-height:28.3px;font-weight:normal;color:#555555;white-space:nowrap;letter-spacing:0.0px;">we</div>
 <div class="abs" style="left:350.00px;top:535.04px;font-size:28.3px;line-height:28.3px;font-weight:normal;color:#555555;white-space:nowrap;letter-spacing:0.0px;">report</div>
 <div class="abs" style="left:31.60px;top:723.75px;font-size:22.5px;line-height:22.5px;font-weight:bold;color:#9e9e9e;white-space:nowrap;letter-spacing:0.8px;">KEYWORDS</div>
 <svg class="ic" style="left:175.69999999999982px;top:725px" width="20.5" height="20.5" viewBox="0 0 21 21"><circle cx="10.5" cy="10.5" r="10.2" fill="#9e9e9e"/><path d="M10.5 5.2 V15.8 M5.2 10.5 H15.8" stroke="#fff" stroke-width="3.2"/></svg>
 <div class="abs" style="left:32.00px;top:761.90px;width:75.00px;height:41.60px;background:#e9e9e9;border-radius:8px"></div>
 <div class="abs" style="left:42.10px;top:772.18px;font-size:22px;line-height:22px;font-weight:normal;color:#1a1a1a;white-space:nowrap;letter-spacing:0.0px;">#new</div>
 <div class="abs" style="left:31.60px;top:843.25px;font-size:22.5px;line-height:22.5px;font-weight:bold;color:#9e9e9e;white-space:nowrap;letter-spacing:0.8px;">METRICS</div>
 <div class="abs" style="left:32.00px;top:881.30px;width:179.90px;height:41.50px;background:#e9e9e9;border-radius:8px"></div>
 <div class="abs" style="left:42.10px;top:891.78px;font-size:22px;line-height:22px;font-weight:normal;color:#1a1a1a;white-space:nowrap;letter-spacing:0.52px;">293 Citations</div>
 <svg class="ic" style="left:184.30px;top:893.80px" width="18.4" height="18.4" viewBox="0 0 19 19"><circle cx="9.5" cy="9.5" r="9.5" fill="#111"/><path d="M4.6 9.5 H13.2 M9.6 5.6 L13.4 9.5 L9.6 13.4" fill="none" stroke="#fff" stroke-width="2.5" stroke-linecap="round" stroke-linejoin="round"/></svg>
 <div class="abs" style="left:222.90px;top:880.90px;width:136.00px;height:41.80px;background:#e9e9e9;border-radius:8px"></div>
 <div class="abs" style="left:233.00px;top:891.78px;font-size:22px;line-height:22px;font-weight:normal;color:#1a1a1a;white-space:nowrap;letter-spacing:-1.0px;">7.79 RCR</div>
 <svg class="ic" style="left:331.00px;top:893.80px" width="18.4" height="18.4" viewBox="0 0 19 19"><circle cx="9.5" cy="9.5" r="9.5" fill="#111"/><path d="M4.6 9.5 H13.2 M9.6 5.6 L13.4 9.5 L9.6 13.4" fill="none" stroke="#fff" stroke-width="2.5" stroke-linecap="round" stroke-linejoin="round"/></svg>
 <div class="abs" style="left:32.00px;top:940.00px;width:150.60px;height:41.60px;background:#e9e9e9;border-radius:8px"></div>
 <div class="abs" style="left:42.10px;top:950.58px;font-size:22px;line-height:22px;font-weight:normal;color:#1a1a1a;white-space:nowrap;letter-spacing:-0.43px;">22.93 FCR</div>
 <svg class="ic" style="left:154.60px;top:952.40px" width="18.4" height="18.4" viewBox="0 0 19 19"><circle cx="9.5" cy="9.5" r="9.5" fill="#111"/><path d="M4.6 9.5 H13.2 M9.6 5.6 L13.4 9.5 L9.6 13.4" fill="none" stroke="#fff" stroke-width="2.5" stroke-linecap="round" stroke-linejoin="round"/></svg>
 <div class="abs" style="left:32.10px;top:1021.85px;font-size:22.5px;line-height:22.5px;font-weight:bold;color:#9e9e9e;white-space:nowrap;letter-spacing:0.8px;">CITEKEY</div>
 <div class="abs" style="left:32.00px;top:1059.70px;width:211.30px;height:41.20px;background:#e9e9e9;border-radius:8px"></div>
 <div class="abs" style="left:42.80px;top:1070.28px;font-size:22px;line-height:22px;font-weight:normal;color:#1a1a1a;white-space:nowrap;letter-spacing:0.26px;">Vedadi:20184a0</div>
 <svg class="ic" style="left:213px;top:1071.5px" width="22" height="21" viewBox="0 0 22 21"><path d="M0.5 1 Q0.5 0 1.5 0 H11 Q12 0 12 1 V5 H7.5 Q6.5 5 6.5 6 V16.5 H1.5 Q0.5 16.5 0.5 15.5 Z" fill="#111"/><path d="M8.3 6.8 H14.5 L20 12.3 V19.2 Q20 20 19.2 20 H9.1 Q8.3 20 8.3 19.2 Z" fill="#fff" stroke="#111" stroke-width="1.7" stroke-linejoin="round"/><path d="M14.2 6.8 V12.6 H20" fill="none" stroke="#111" stroke-width="1.5"/></svg>
 <div class="abs" style="left:31.60px;top:1140.85px;font-size:22.5px;line-height:22.5px;font-weight:bold;color:#9e9e9e;white-space:nowrap;letter-spacing:0.8px;">IDENTIFIERS</div>
 <div class="abs" style="left:32.00px;top:1179.00px;width:320.00px;height:41.60px;background:#e9e9e9;border-radius:8px"></div>
 <div class="abs" style="left:42.10px;top:1189.98px;font-size:22px;line-height:22px;font-weight:normal;color:#1a1a1a;white-space:nowrap;letter-spacing:0.29px;">doi: 10.1038/nchembio.599</div>
 <svg class="ic" style="left:323.30px;top:1190.80px" width="18.4" height="18.4" viewBox="0 0 19 19"><circle cx="9.5" cy="9.5" r="9.5" fill="#111"/><path d="M4.6 9.5 H13.2 M9.6 5.6 L13.4 9.5 L9.6 13.4" fill="none" stroke="#fff" stroke-width="2.5" stroke-linecap="round" stroke-linejoin="round"/></svg>
 <div class="abs" style="left:32.00px;top:1238.00px;width:257.30px;height:41.30px;background:#e9e9e9;border-radius:8px"></div>
 <div class="abs" style="left:41.50px;top:1248.88px;font-size:22px;line-height:22px;font-weight:normal;color:#1a1a1a;white-space:nowrap;letter-spacing:0.28px;">pmcid: PMC3184254</div>
 <svg class="ic" style="left:261.00px;top:1249.60px" width="18.4" height="18.4" viewBox="0 0 19 19"><circle cx="9.5" cy="9.5" r="9.5" fill="#111"/><path d="M4.6 9.5 H13.2 M9.6 5.6 L13.4 9.5 L9.6 13.4" fill="none" stroke="#fff" stroke-width="2.5" stroke-linecap="round" stroke-linejoin="round"/></svg>
 <div class="abs" style="left:32.00px;top:1297.00px;width:209.00px;height:40.80px;background:#e9e9e9;border-radius:8px"></div>
 <div class="abs" style="left:41.50px;top:1307.78px;font-size:22px;line-height:22px;font-weight:normal;color:#1a1a1a;white-space:nowrap;letter-spacing:0.27px;">pmid: 21743462</div>
 <svg class="ic" style="left:212.30px;top:1308.20px" width="18.4" height="18.4" viewBox="0 0 19 19"><circle cx="9.5" cy="9.5" r="9.5" fill="#111"/><path d="M4.6 9.5 H13.2 M9.6 5.6 L13.4 9.5 L9.6 13.4" fill="none" stroke="#fff" stroke-width="2.5" stroke-linecap="round" stroke-linejoin="round"/></svg>
 <svg class="ic" style="left:31.80px;top:636px" width="24" height="24" viewBox="0 0 24 24"><path d="M11.50 1.30 L14.44 8.15 L21.87 8.83 L16.26 13.75 L17.91 21.02 L11.50 17.20 L5.09 21.02 L6.74 13.75 L1.13 8.83 L8.56 8.15 Z" fill="none" stroke="#212529" stroke-width="1.5" stroke-linejoin="round"/></svg><svg class="ic" style="left:57.25px;top:636px" width="24" height="24" viewBox="0 0 24 24"><path d="M11.50 1.30 L14.44 8.15 L21.87 8.83 L16.26 13.75 L17.91 21.02 L11.50 17.20 L5.09 21.02 L6.74 13.75 L1.13 8.83 L8.56 8.15 Z" fill="none" stroke="#212529" stroke-width="1.5" stroke-linejoin="round"/></svg><svg class="ic" style="left:82.70px;top:636px" width="24" height="24" viewBox="0 0 24 24"><path d="M11.50 1.30 L14.44 8.15 L21.87 8.83 L16.26 13.75 L17.91 21.02 L11.50 17.20 L5.09 21.02 L6.74 13.75 L1.13 8.83 L8.56 8.15 Z" fill="none" stroke="#212529" stroke-width="1.5" stroke-linejoin="round"/></svg><svg class="ic" style="left:108.15px;top:636px" width="24" height="24" viewBox="0 0 24 24"><path d="M11.50 1.30 L14.44 8.15 L21.87 8.83 L16.26 13.75 L17.91 21.02 L11.50 17.20 L5.09 21.02 L6.74 13.75 L1.13 8.83 L8.56 8.15 Z" fill="none" stroke="#212529" stroke-width="1.5" stroke-linejoin="round"/></svg><svg class="ic" style="left:133.60px;top:636px" width="24" height="24" viewBox="0 0 24 24"><path d="M11.50 1.30 L14.44 8.15 L21.87 8.83 L16.26 13.75 L17.91 21.02 L11.50 17.20 L5.09 21.02 L6.74 13.75 L1.13 8.83 L8.56 8.15 Z" fill="none" stroke="#212529" stroke-width="1.5" stroke-linejoin="round"/></svg><svg class="ic" style="left:175px;top:636px" width="24" height="24" viewBox="0 0 24 24"><circle cx="11.6" cy="11.8" r="9.3" fill="none" stroke="#212529" stroke-width="3"/></svg><svg class="ic" style="left:214px;top:638px" width="28" height="24" viewBox="0 0 28 24"><rect x="0.8" y="1.5" width="1.7" height="21" fill="#3a3f44"/><circle cx="1.6" cy="1.6" r="1.3" fill="#3a3f44"/><path d="M3.5 3.2 Q7 1.2 11 3.2 Q15 5.2 24 2.6 V12.5 Q15 15 11 13 Q7 11 3.5 13" fill="none" stroke="#3a3f44" stroke-width="1.5"/></svg>
 <svg class="ic" style="left:1px;top:738px" width="24" height="32" viewBox="0 0 24 32"><path d="M4 3 L16 15 L4 27" fill="none" stroke="#c8c8c8" stroke-width="4.5"/></svg>
</div>
<div id="shade"></div><div id="shade2"></div>
<svg class="ic" style="left:0;top:1476px" width="30" height="24" viewBox="0 0 30 24"><path d="M0 0 H3 V14.7 A14.5 14.5 0 0 0 17.5 29.2 H0 Z" fill="#868587"/><path d="M3.5 0 V14.7 A14 14 0 0 0 17.5 28.7" fill="none" stroke="#6e7072" stroke-width="1"/><path d="M4.5 0 V14.7 A13 13 0 0 0 17.5 27.7" fill="none" stroke="#fbfbfb" stroke-width="1"/></svg>
</div></body></html>
